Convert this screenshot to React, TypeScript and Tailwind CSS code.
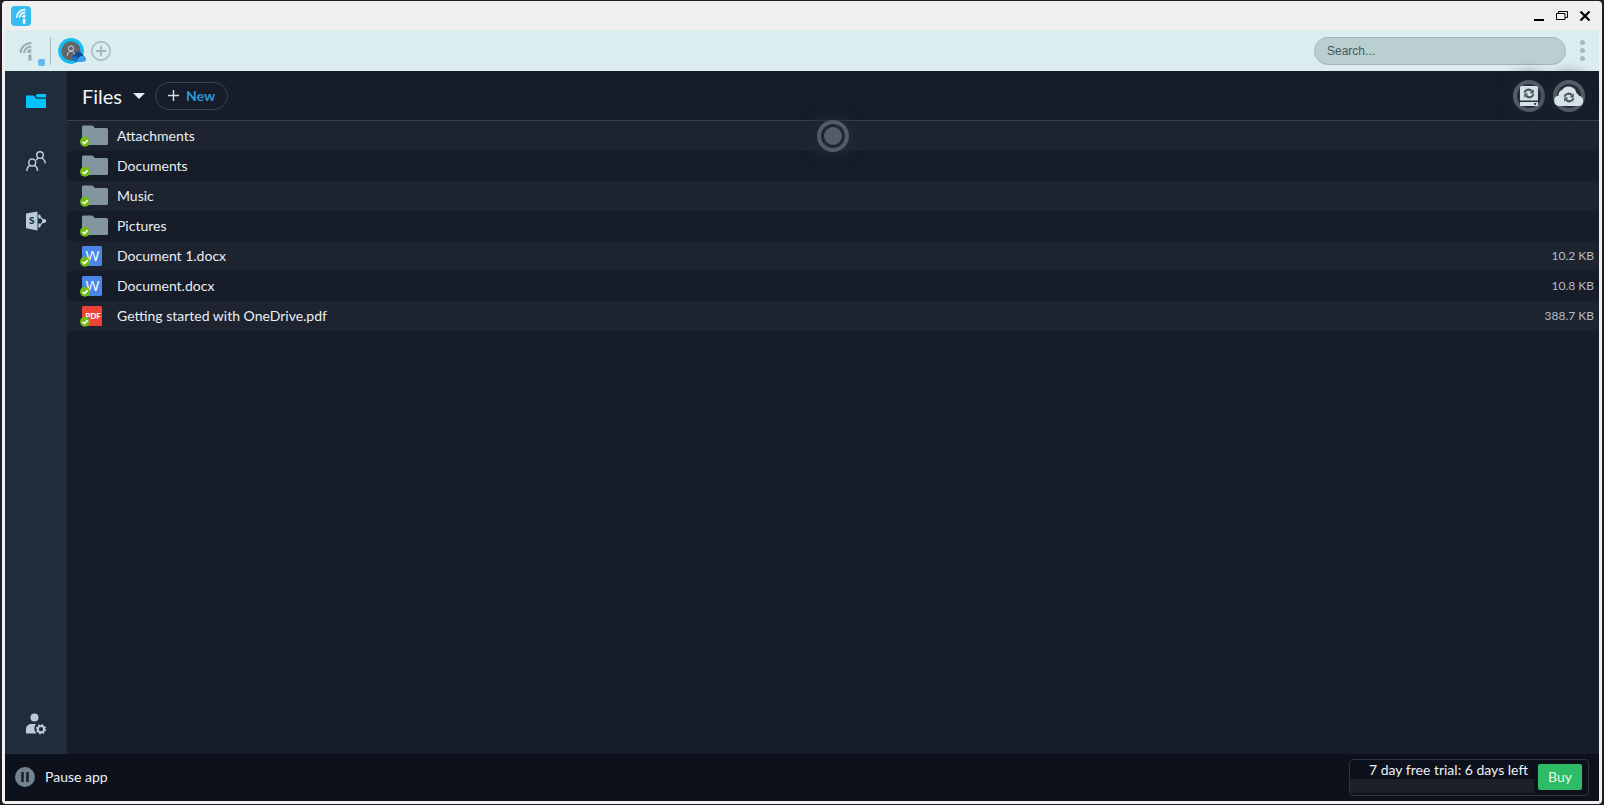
import type { ReactNode } from "react";

type FileItem = {
  name: string;
  kind: "folder" | "word" | "pdf";
  size?: string;
};

const files: FileItem[] = [
  { name: "Attachments", kind: "folder" },
  { name: "Documents", kind: "folder" },
  { name: "Music", kind: "folder" },
  { name: "Pictures", kind: "folder" },
  { name: "Document 1.docx", kind: "word", size: "10.2 KB" },
  { name: "Document.docx", kind: "word", size: "10.8 KB" },
  { name: "Getting started with OneDrive.pdf", kind: "pdf", size: "388.7 KB" },
];

// signal arcs over an "i"
const Signal = ({ className }: { className: string }) => (
  <svg viewBox="0 0 14 20" className={className} fill="none" stroke="currentColor">
    <path d="M1.500 12A10.500 10.500 0 0 1 12.400 2" strokeWidth="2" />
    <path d="M5 12.200A7.200 7.200 0 0 1 12.400 5.500" strokeWidth="2" />
    <path d="M8.600 11.400A3.600 3.600 0 0 1 12.400 8.800" strokeWidth="1.700" />
    <path d="M10.900 13.500V19.600" strokeWidth="3.200" />
    <path d="M10.900 9.800V12" strokeWidth="2.800" />
  </svg>
);

const TitleBar = () => (
  <header className="flex h-[29px] shrink-0 items-center justify-between bg-[#efefef] pr-2 pl-1.5">
    <span className="flex size-5 items-center justify-center rounded bg-[#33bdf0] text-white">
      <Signal className="h-4 w-3" />
    </span>
    <div className="flex items-center gap-[11px] text-black">
      <button aria-label="Minimize" className="size-3">
        <svg viewBox="0 0 12 12" className="size-3">
          <path d="M1 10h10" stroke="currentColor" strokeWidth="2" />
        </svg>
      </button>
      <button aria-label="Restore" className="size-3">
        <svg viewBox="0 0 12 12" className="size-3 overflow-visible" fill="none" stroke="currentColor">
          <path d="M2.500 3.500V1.500h9v6H9" />
          <path d="M.5 3.500H9v6H.5z" />
        </svg>
      </button>
      <button aria-label="Close" className="size-3">
        <svg viewBox="0 0 12 12" className="size-3">
          <path d="M1.500 1.500l9 9m0-9l-9 9" stroke="currentColor" strokeWidth="2.200" />
        </svg>
      </button>
    </div>
  </header>
);

const Toolbar = () => (
  <div className="flex h-[41px] shrink-0 items-center justify-between bg-[#dbedee] pr-[13px] pl-[13px]">
    <div className="flex items-center">
      <div className="relative flex h-7 w-8 items-center text-[#9baeb1]">
        <Signal className="h-5 w-4" />
        <span className="absolute right-[5px] -bottom-px size-[7px] rounded-xs bg-[#66b8ef]" />
      </div>
      <div className="h-7 w-px bg-[#a7b9bb]" />
      <button aria-label="OneDrive account" className="ml-[7px] size-7">
        <svg viewBox="0 0 28 28" className="size-7 overflow-visible" fill="none">
          <circle cx="13" cy="14" r="11.300" fill="#62666b" stroke="#13bff0" strokeWidth="3.200" />
          <circle cx="13" cy="11.500" r="2.600" stroke="#d5dadd" />
          <path d="M9.400 18.600c0-2.200 1.200-4.400 3.600-4.400s3.600 2.200 3.600 4.400" stroke="#d5dadd" />
          <path d="M14.300 20.500a3 3 0 0 1 2.200-3 4.300 4.300 0 0 1 8-.2l2.500 3-6 3.200-5-.5c-1-.4-1.700-1.300-1.700-2.500z" fill="#0f4a94" />
          <path d="M13.800 21.500c0-2 2.200-3.200 4.200-2.300l7 5.600h-6.500c-2.500 0-4.700-1-4.700-3.300z" fill="#1a6fbf" />
          <path d="M18.500 24.800l2.500-4.300c1.600-1.800 3.600-2.200 5-1.200a2.900 2.900 0 0 1 .3 5.500z" fill="#3aa0e8" />
        </svg>
      </button>
      <button aria-label="Add account" className="ml-[5px] size-5 text-[#a3b6b8]">
        <svg viewBox="0 0 20 20" className="size-5" fill="none" stroke="currentColor">
          <circle cx="10" cy="10" r="9.200" strokeWidth="1.400" />
          <path d="M10 4.800v10.400M4.800 10h10.400" strokeWidth="1.800" />
        </svg>
      </button>
    </div>
    <div className="flex items-center gap-3">
      <input
        type="text"
        aria-label="Search"
        placeholder="Search..."
        className="h-7 w-[252px] rounded-full border border-[#a3b6b7] bg-[#bacfd0] px-3 font-['Liberation_Sans',sans-serif] text-xs text-[#46565c] placeholder:text-[#46565c]"
      />
      <button aria-label="Menu" className="flex w-2 flex-col items-center gap-[3px]">
        <span className="size-[5px] rounded-full bg-[#a3b9bb]" />
        <span className="size-[5px] rounded-full bg-[#a3b9bb]" />
        <span className="size-[5px] rounded-full bg-[#a3b9bb]" />
      </button>
    </div>
  </div>
);

const Sidebar = () => (
  <nav className="flex w-[62px] shrink-0 flex-col items-center bg-[#202b3b] pt-5 pb-5 text-[#b9cbd5]">
    <button aria-label="Files" className="size-5">
      <svg viewBox="0 0 20 20" className="size-5" fill="#00c3ff">
        <path d="M0 4.500h7.500l2 2.200c.6.700 1.200 1 2 1H20V17H0z" />
        <path d="M11.500 3H20v3.500h-8c-.6 0-1-.2-1.300-.6L9.900 4.800c.1-1.100.7-1.800 1.600-1.800z" />
      </svg>
    </button>
    <button aria-label="Shared" className="mt-10 size-5">
      <svg viewBox="0 0 20 20" className="size-5" fill="none" stroke="currentColor" strokeWidth="1.500">
        <circle cx="6.200" cy="11.500" r="3.500" />
        <path d="M.9 20c0-3.300 1.800-5 3.600-5.400M11.500 20c0-3.300-1.800-5-3.600-5.400" />
        <circle cx="14" cy="4" r="3.300" />
        <path d="M10.300 9.300c.4-1 1.200-1.800 2.200-2.200M15.500 7.100c2.100.7 3.600 2.400 3.700 5.400" />
      </svg>
    </button>
    <button aria-label="SharePoint" className="mt-10 size-5">
      <svg viewBox="0 0 20 20" className="size-5">
        <path d="M0 2.500L11.500.5v19L0 17.200z" fill="currentColor" />
        <path d="M12.500 4.800l6 5.200-6 5.200" fill="none" stroke="currentColor" strokeWidth="1.300" />
        <circle cx="18" cy="10" r="2.100" fill="currentColor" />
        <path d="M12.500 3.200a2.300 2.300 0 0 1 0 4.600zM12.500 12.200a2.300 2.300 0 0 1 0 4.600z" fill="currentColor" />
        <text x="2.900" y="13.400" fontSize="10" fontWeight="900" fontFamily="Lato" fill="#202b3b">
          S
        </text>
      </svg>
    </button>
    <button aria-label="Account settings" className="mt-auto size-5">
      <svg viewBox="0 0 20 20" className="size-5 overflow-visible" fill="currentColor">
        <circle cx="8.500" cy="3.500" r="4" />
        <path d="M0 19.500V15c0-3 2.500-5 5.500-5H10c-1.500 2-2 4-1.400 6 .3 1.500 1 2.500 2 3.500z" />
        <circle cx="15" cy="15.200" r="3.100" fill="none" stroke="currentColor" strokeWidth="2" />
        <circle
          cx="15"
          cy="15.200"
          r="4.400"
          fill="none"
          stroke="currentColor"
          strokeWidth="1.600"
          strokeDasharray="1.730 1.730"
        />
      </svg>
    </button>
  </nav>
);

const Check = () => (
  <>
    <circle cx="5" cy="16.800" r="5" fill="#72ba14" />
    <path d="M2.500 16.800l1.900 1.900 3.300-3.600" fill="none" stroke="#fff" strokeWidth="1.600" />
  </>
);

const FileIcon = ({ kind }: { kind: FileItem["kind"] }) => (
  <svg viewBox="0 0 28 22" className="h-[22px] w-7" aria-hidden="true">
    {kind === "folder" && (
      <path
        d="M2 2Q2 .5 3.500.5H12q.8 0 1.300.7L14.800 3H26.500Q28 3 28 4.500V18.500q0 1.500-1.500 1.500H3.500Q2 20 2 18.500z"
        fill="#83959f"
      />
    )}
    {kind === "word" && (
      <>
        <rect x="2" y="1" width="20" height="20" rx="1.500" fill="#4a86e8" />
        <text x="12.500" y="16" textAnchor="middle" fontSize="15" fontFamily="Open Sans" fill="#fff">
          W
        </text>
      </>
    )}
    {kind === "pdf" && (
      <>
        <rect x="2" y="1" width="20" height="20" rx="1.500" fill="#ee4237" />
        <text x="13" y="14" textAnchor="middle" fontSize="8" fontWeight="900" fontFamily="Lato" fill="#fff">
          PDF
        </text>
      </>
    )}
    <Check />
  </svg>
);

const SyncButton = ({ label, children }: { label: string; children: ReactNode }) => (
  <button
    aria-label={label}
    className="flex size-8 items-center justify-center rounded-full border-4 border-[#535b66] bg-[#252d38] text-[#d5e2e8] shadow-[0_0_14px_4px_#1b2430]"
  >
    {children}
  </button>
);

const SyncArrows = () => (
  <g fill="none" stroke="#4c5860" strokeWidth="2.200">
    <path d="M11.500 12.200a4.300 4.300 0 0 1 7.400-1.500M20.500 13.800a4.300 4.300 0 0 1-7.400 1.500" />
    <path d="M20.800 8.800v4.200h-4.200zM11.200 17.200V13h4.200z" fill="#4c5860" stroke="none" />
  </g>
);

const FilesHeader = () => (
  <div className="flex h-[50px] items-center justify-between border-b border-[#3b434f] pr-3.5 pl-[15px]">
    <div className="flex items-center">
      <button className="flex items-center gap-[11px] text-xl text-[#f3f6f9]">
        Files
        <svg viewBox="0 0 12 6" className="h-1.5 w-3" fill="#e6eef4">
          <path d="M0 0h12L6 6z" />
        </svg>
      </button>
      <button className="ml-2.5 flex h-7 items-center gap-[7px] rounded-full border border-[#3a4350] px-3 text-sm font-bold text-[#2c99d4]">
        <svg viewBox="0 0 11 11" className="size-[11px]" stroke="#d3dde4" strokeWidth="1.500">
          <path d="M5.500 0v11M0 5.500h11" />
        </svg>
        New
      </button>
    </div>
    <div className="flex gap-2">
      <SyncButton label="Local sync">
        <svg viewBox="0 0 32 32" className="size-8 shrink-0">
          <path d="M7 7.500Q7 6 8.500 6h15Q25 6 25 7.500V20.500H7zM7 22h18V26H7z" fill="currentColor" />
          <path d="M21 23h2.200v1.800H21z" fill="#38424c" />
          <g transform="translate(0 .5)">
            <SyncArrows />
          </g>
        </svg>
      </SyncButton>
      <SyncButton label="Cloud sync">
        <svg viewBox="0 0 32 32" className="size-8 shrink-0">
          <path
            d="M6 26a5.300 5.300 0 0 1-.5-10.500A5.800 5.800 0 0 1 9.300 9.800a8 8 0 0 1 14.200 3.200 5 5 0 0 1 2.500 2.800A5.200 5.200 0 0 1 26 26z"
            fill="currentColor"
          />
          <g transform="translate(0 4.500)">
            <SyncArrows />
          </g>
        </svg>
      </SyncButton>
    </div>
  </div>
);

const FileTable = () => (
  <table className="w-full text-left" aria-label="Files">
    <tbody>
      {files.map((file) => (
        <tr key={file.name} className="h-[30px] odd:bg-[#1d2430] even:bg-[#161c28]">
          <td className="w-[50px] p-0 pl-[13px]">
            <FileIcon kind={file.kind} />
          </td>
          <td className="p-0 text-sm text-[#eaeff4]">{file.name}</td>
          <td className="p-0 pr-[5px] text-right text-xs text-[#b4bdc6]">{file.size}</td>
        </tr>
      ))}
    </tbody>
  </table>
);

const Footer = () => (
  <footer className="flex h-[47px] shrink-0 items-center justify-between bg-[#0c111c] pr-2.5 pb-px pl-2.5 text-sm text-[#eef2f6]">
    <button className="flex items-center gap-2.5">
      <svg viewBox="0 0 20 20" className="size-5">
        <circle cx="10" cy="10" r="10" fill="#74848d" />
        <path d="M7.500 5v10M12.500 5v10" stroke="#17232c" strokeWidth="2.600" />
      </svg>
      Pause app
    </button>
    <div className="flex h-[37px] w-60 items-center justify-between rounded-sm border border-[#2e3541] pr-1.5">
      <div className="w-[184px]">
        <p className="pr-1.5 text-right leading-[18px]">7 day free trial: 6 days left</p>
        <div className="h-3.5 bg-[#1c202b]" />
      </div>
      <button className="h-[26px] w-11 rounded-xs bg-[#2dbb65] text-[#e6f7ed]">Buy</button>
    </div>
  </footer>
);

export default function App() {
  return (
    <div className="h-screen bg-[#241c21] px-0.5 pt-px pb-px font-[Lato,sans-serif]">
      <div className="flex h-full flex-col rounded-sm bg-[#f1f0f3] px-[3px] pb-[3px]">
        <TitleBar />
        <Toolbar />
        <div className="flex min-h-0 flex-1">
          <Sidebar />
          <main className="relative min-w-0 flex-1 bg-[#161c28]">
            <FilesHeader />
            <FileTable />
            {/* loading indicator over the list */}
            <div className="absolute top-[49px] left-1/2 flex size-8 -translate-x-1/2 items-center justify-center rounded-full border-4 border-[#535b66] bg-[#1f2732] shadow-[0_0_14px_4px_#1f2a36]">
              <span className="size-[18px] rounded-full bg-[#535b66]" />
            </div>
          </main>
        </div>
        <Footer />
      </div>
    </div>
  );
}
